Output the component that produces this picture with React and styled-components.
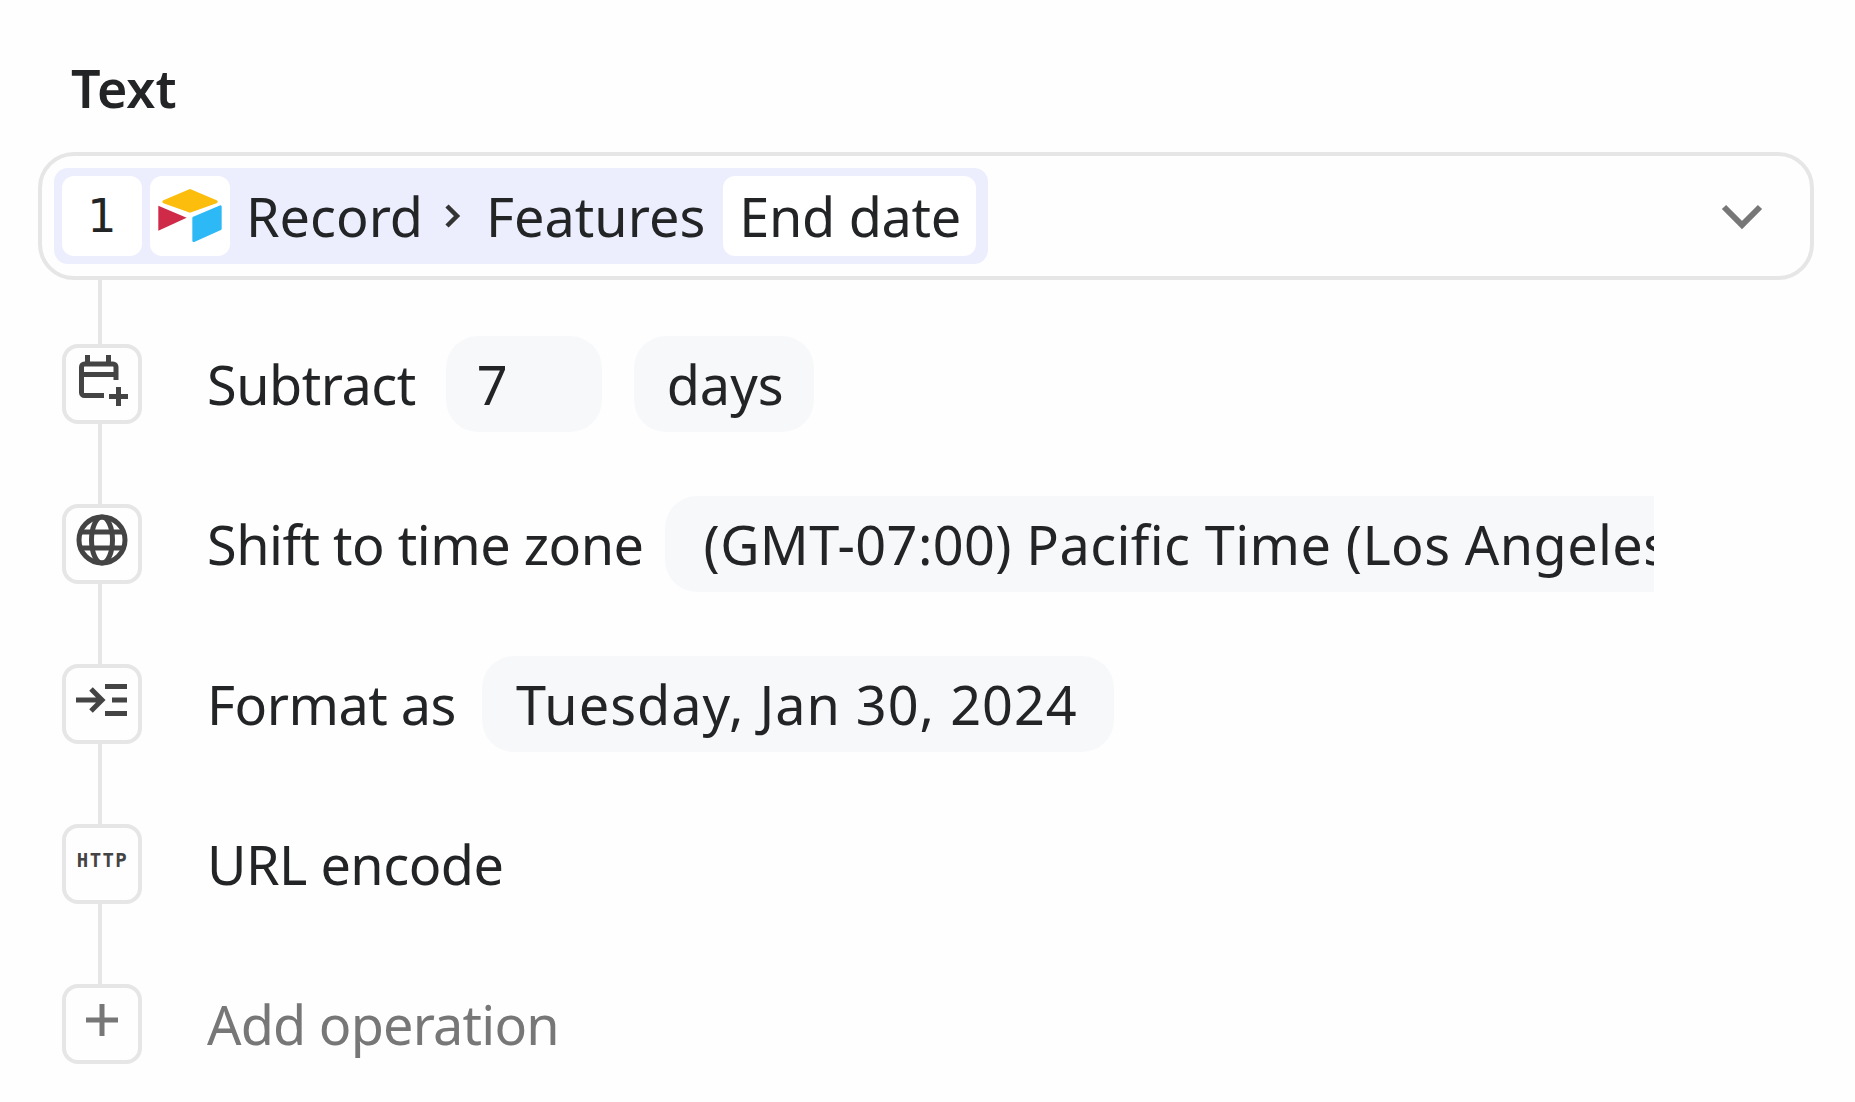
import React from "react";
import styled, { createGlobalStyle } from "styled-components";

const GlobalStyle = createGlobalStyle`
  html, body {
    margin: 0;
    padding: 0;
    background: #fefefe;
    font-family: "Noto Sans", "Liberation Sans", sans-serif;
    color: #222426;
  }
`;

const Page = styled.div`
  width: 1855px;
  height: 1102px;
  box-sizing: border-box;
  padding: 52px 0 0 38px;
  overflow: hidden;
`;

const Title = styled.h2`
  margin: 0 0 28px 33px;
  font-size: 52px;
  line-height: 72px;
  font-weight: 600;
`;

const Select = styled.div`
  width: 1776px;
  height: 128px;
  box-sizing: border-box;
  display: flex;
  align-items: center;
  padding: 0 44px 0 12px;
  border: 4px solid #e6e6e6;
  border-radius: 36px;
`;

const Pill = styled.div`
  display: flex;
  align-items: center;
  gap: 8px;
  height: 96px;
  box-sizing: border-box;
  padding: 0 12px 0 8px;
  background: #eceefd;
  border-radius: 14px;
`;

const Tile = styled.div`
  display: flex;
  align-items: center;
  justify-content: center;
  width: 80px;
  height: 80px;
  background: #fff;
  border-radius: 12px;
  font-family: "DejaVu Sans", sans-serif;
  font-size: 46px;
`;

const Crumb = styled.span`
  font-size: 54px;
  line-height: 80px;
  margin-left: ${(p) => p.$left}px;
`;

const Field = styled.div`
  display: flex;
  align-items: center;
  height: 80px;
  padding: 0 15px 0 16px;
  margin-left: 10px;
  background: #fff;
  border-radius: 12px;
  font-size: 54px;
  letter-spacing: -0.3px;
`;

const CrumbArrow = styled.svg`
  display: block;
  margin-left: 9px;
`;

const Chevron = styled.svg`
  display: block;
  margin-left: auto;
`;

const Steps = styled.div`
  margin-left: 24px;
`;

const Connector = styled.div`
  width: 4px;
  height: ${(p) => p.$height}px;
  margin-left: 36px;
  background: #e6e6e6;
`;

const Step = styled.div`
  display: flex;
  align-items: center;
  height: 80px;
`;

const IconBox = styled.div`
  flex: none;
  display: flex;
  align-items: center;
  justify-content: center;
  width: 80px;
  height: 80px;
  box-sizing: border-box;
  border: 4px solid #e6e6e6;
  border-radius: 16px;
  margin-right: 65px;
  color: #444;
`;

const HttpLabel = styled.span`
  font-family: "DejaVu Sans Mono", monospace;
  font-weight: 700;
  font-size: 19px;
  line-height: 18px;
  letter-spacing: 1.4px;
  margin: -8px 0 0 1px;
`;

const Label = styled.span`
  font-size: 54px;
  line-height: 80px;
  letter-spacing: ${(p) => (p.$muted ? -0.8 : -0.5)}px;
  white-space: nowrap;
  color: ${(p) => (p.$muted ? "#777" : "#222426")};
`;

const Chip = styled.div`
  flex: none;
  display: flex;
  align-items: center;
  box-sizing: border-box;
  width: ${(p) => p.$width}px;
  height: 96px;
  margin-left: ${(p) => p.$left}px;
  padding-left: ${(p) => p.$pad}px;
  background: #f7f8fa;
  border-radius: ${(p) => (p.$clipped ? "32px 0 0 32px" : "32px")};
  font-size: 54px;
  letter-spacing: ${(p) => p.$spacing || 0}px;
  white-space: nowrap;
  overflow: hidden;
`;

const iconProps = {
  width: 72,
  height: 72,
  viewBox: "0 0 72 72",
  fill: "none",
  stroke: "currentColor",
  strokeWidth: 5,
};

const CalendarPlusIcon = () => (
  <svg {...iconProps}>
    <path d="M50 32V19a3 3 0 0 0-3-3H18.5a3 3 0 0 0-3 3V44.5a3 3 0 0 0 3 3H38" />
    <path d="M15 26.5H50M21.5 7V16M42.5 7V16" />
    <path d="M52.5 39V58M43 48.5H62" />
  </svg>
);

const GlobeIcon = () => (
  <svg {...iconProps}>
    <circle cx="36" cy="32" r="23" />
    <ellipse cx="36" cy="32" rx="10.5" ry="23" />
    <path d="M14 24H58M14 40H58" />
  </svg>
);

const FormatIcon = () => (
  <svg {...iconProps}>
    <path d="M10 32H36M25 21L36 32L25 43" />
    <path d="M39 18.5H61M46 32H61M39 45.5H61" />
  </svg>
);

const PlusIcon = () => (
  <svg {...iconProps} stroke="#777">
    <path d="M36 16V48M20 32H52" />
  </svg>
);

const AirtableLogo = () => (
  <svg width="80" height="80" viewBox="0 0 240 240">
    <path d="M42 77L120 44L198 77L120 105Z" fill="#fdbd0c" stroke="#fdbd0c" strokeWidth="10" strokeLinejoin="round" />
    <path d="M25 89L110 125L25 164Z" fill="#cf2b49" />
    <path d="M131 126L211 92V158L131 194Z" fill="#2db8f6" stroke="#2db8f6" strokeWidth="8" strokeLinejoin="round" />
  </svg>
);

export default function App() {
  return (
    <Page>
      <GlobalStyle />
      <Title>Text</Title>
      <Select>
        <Pill>
          <Tile>1</Tile>
          <Tile>
            <AirtableLogo />
          </Tile>
          <Crumb $left={8}>Record</Crumb>
          <CrumbArrow width="24" height="32" viewBox="0 0 24 32" fill="none" stroke="#333" strokeWidth="4.5">
            <path d="M7 6L17 16L7 26" />
          </CrumbArrow>
          <Crumb $left={14}>Features</Crumb>
          <Field>End date</Field>
        </Pill>
        <Chevron width="48" height="32" viewBox="0 0 48 32" fill="none" stroke="#777" strokeWidth="6">
          <path d="M6 7L24 25L42 7" />
        </Chevron>
      </Select>
      <Steps>
        <Connector $height={64} />
        <Step>
          <IconBox>
            <CalendarPlusIcon />
          </IconBox>
          <Label>Subtract</Label>
          <Chip $width={156} $left={30} $pad={31}>7</Chip>
          <Chip $width={180} $left={32} $pad={33}>days</Chip>
        </Step>
        <Connector $height={80} />
        <Step>
          <IconBox>
            <GlobeIcon />
          </IconBox>
          <Label>Shift to time zone</Label>
          <Chip $width={989} $left={21} $pad={39} $spacing={0.4} $clipped>
            (GMT-07:00) Pacific Time (Los Angeles)
          </Chip>
        </Step>
        <Connector $height={80} />
        <Step>
          <IconBox>
            <FormatIcon />
          </IconBox>
          <Label>Format as</Label>
          <Chip $width={632} $left={26} $pad={34} $spacing={1}>Tuesday, Jan 30, 2024</Chip>
        </Step>
        <Connector $height={80} />
        <Step>
          <IconBox>
            <HttpLabel>HTTP</HttpLabel>
          </IconBox>
          <Label>URL encode</Label>
        </Step>
        <Connector $height={80} />
        <Step>
          <IconBox>
            <PlusIcon />
          </IconBox>
          <Label $muted>Add operation</Label>
        </Step>
      </Steps>
    </Page>
  );
}
